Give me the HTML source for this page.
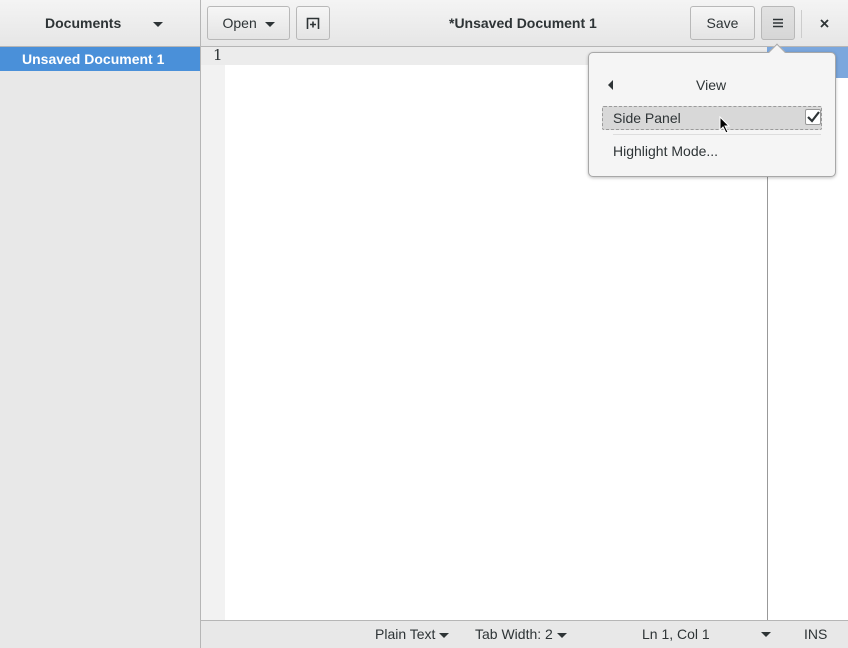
<!DOCTYPE html>
<html><head><style>
*{margin:0;padding:0;box-sizing:border-box}
body{width:848px;height:648px;overflow:hidden;background:#fff;font-family:"Liberation Sans","DejaVu Sans",sans-serif;font-size:14px;color:#2e3436;position:relative}
.a{position:absolute}
.hdr{left:0;top:0;width:848px;height:47px;background:linear-gradient(#f4f4f4,#e6e6e6);border-bottom:1px solid #b6b6b6}
.btn{position:absolute;border:1px solid #b8b8b8;border-radius:3px;background:linear-gradient(#f6f6f6,#e4e4e4);height:34px;top:6px;font-size:14px;line-height:32px;text-align:center}
.tri{display:inline-block;width:0;height:0;border-left:5px solid transparent;border-right:5px solid transparent;border-top:5px solid #2e3436;vertical-align:middle}
.t{position:absolute;width:0;height:0;border-left:5px solid transparent;border-right:5px solid transparent;border-top:5px solid #2e3436}
</style></head><body>
<div class="a hdr"></div>
<div class="a" style="left:200px;top:0;width:1px;height:648px;background:#b6b6b6"></div>
<div class="a" style="left:45px;top:15px;font-weight:bold;font-size:14px">Documents</div>
<div class="t" style="left:153px;top:22px"></div>
<div class="btn" style="left:207px;width:83px">Open &nbsp;<span class="tri"></span></div>
<div class="btn" style="left:296px;width:34px"><svg width="16" height="16" viewBox="0 0 16 16" style="margin-top:8px"><path d="M2.5 14V3.5h11V14M8 6.5v6M5 9.5h6" stroke="#2e3436" stroke-width="1.6" fill="none"/></svg></div>
<div class="a" style="left:449px;top:15px;font-weight:bold">*Unsaved Document 1</div>
<div class="btn" style="left:690px;width:65px">Save</div>
<div class="btn" style="left:761px;width:34px;background:linear-gradient(#e2e2e2,#d6d6d6)"><svg width="12" height="12" viewBox="0 0 12 12" style="margin-top:10px"><path d="M1 2.5h10M1 6h10M1 9.5h10" stroke="#2e3436" stroke-width="1.6"/></svg></div>
<div class="a" style="left:801px;top:10px;width:1px;height:28px;background:#ccc"></div>
<div class="a" style="left:819px;top:17px"><svg width="12" height="12"><path d="M2 2l7 7M9 2l-7 7" stroke="#2e3436" stroke-width="1.8"/></svg></div>
<!-- sidebar -->
<div class="a" style="left:0;top:47px;width:200px;height:601px;background:#e8e8e8"></div>
<div class="a" style="left:0;top:47px;width:200px;height:24px;background:#4a90d9;color:#fff;font-weight:bold;padding-left:22px;line-height:24px">Unsaved Document 1</div>
<!-- editor -->
<div class="a" style="left:201px;top:47px;width:24px;height:573px;background:#f2f2f2"></div>
<div class="a" style="left:201px;top:47px;width:566px;height:18px;background:#ececec"></div>
<div class="a" style="left:213px;top:46px;font-family:'DejaVu Serif',serif;font-size:15px">1</div>
<div class="a" style="left:767px;top:47px;width:1px;height:573px;background:#999"></div>
<div class="a" style="left:767px;top:47px;width:81px;height:31px;background:#7ba7dd"></div>
<!-- status -->
<div class="a" style="left:201px;top:620px;width:647px;height:28px;background:#e8e8e8;border-top:1px solid #b6b6b6"></div>
<div class="a" style="left:375px;top:626px">Plain Text <span class="tri"></span></div>
<div class="a" style="left:475px;top:626px">Tab Width: 2 <span class="tri"></span></div>
<div class="a" style="left:642px;top:626px">Ln 1, Col 1</div>
<div class="t" style="left:761px;top:632px"></div>
<div class="a" style="left:804px;top:626px">INS</div>
<!-- popover -->
<div class="a" style="left:588px;top:52px;width:248px;height:125px;background:#f5f5f5;border:1px solid #a8a8a8;border-radius:5px;box-shadow:0 1px 3px rgba(0,0,0,.25)"></div>
<div class="a" style="left:771px;top:46px;width:12px;height:12px;background:#f5f5f5;border-left:1px solid #a8a8a8;border-top:1px solid #a8a8a8;transform:rotate(45deg)"></div>
<div class="a" style="left:608px;top:80px;width:0;height:0;border-top:5px solid transparent;border-bottom:5px solid transparent;border-right:5px solid #2e3436"></div>
<div class="a" style="left:696px;top:77px">View</div>
<div class="a" style="left:602px;top:106px;width:220px;height:24px;background:#d8d8d8;border:1px dashed #9a9a9a;border-radius:2px"></div>
<div class="a" style="left:613px;top:110px">Side Panel</div>
<div class="a" style="left:805px;top:109px;width:16px;height:16px;background:#fff;border:1px solid #999;border-radius:2px"><svg width="14" height="14"><path d="M2 7l4 4 7-9" stroke="#2e3436" stroke-width="2.2" fill="none"/></svg></div>
<div class="a" style="left:613px;top:134px;width:208px;height:1px;background:#ddd"></div>
<div class="a" style="left:613px;top:143px">Highlight Mode...</div>
<svg class="a" style="left:719px;top:116px" width="12" height="18"><path d="M1 1v13l3-3 3 6 2-1-3-6h4z" fill="#000" stroke="#fff" stroke-width="1"/></svg>
</body></html>
